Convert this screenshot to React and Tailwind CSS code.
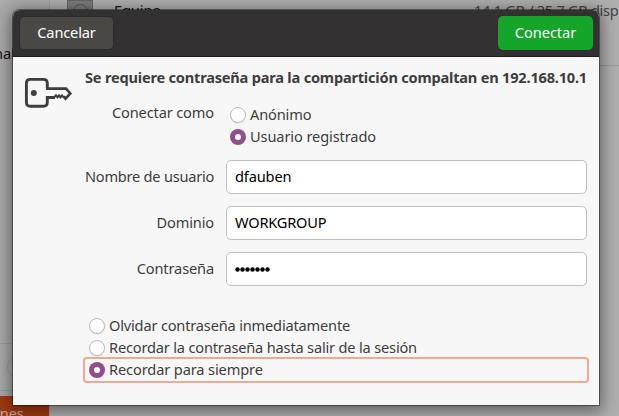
import React from 'react';

function Radio({ checked }) {
  return checked ? (
    <span className="flex size-4 shrink-0 items-center justify-center rounded-full bg-[#924d8b]">
      <span className="size-[6px] rounded-full bg-white" />
    </span>
  ) : (
    <span className="size-4 shrink-0 rounded-full border border-[#b9b9b9] bg-white shadow-[0_1px_1px_rgba(0,0,0,0.06)]" />
  );
}

function Option({ checked, className = '', children }) {
  return (
    <label className={`flex h-[22px] items-center gap-[4px] ${className}`}>
      <Radio checked={checked} />
      <span className="pb-[2px]">{children}</span>
    </label>
  );
}

function Field({ label, labelClass, children }) {
  return (
    <div className="flex h-[34px] items-center gap-3">
      <span className={`w-[129px] pb-[2px] text-right whitespace-nowrap ${labelClass}`}>{label}</span>
      <div className="flex h-full flex-1 items-center rounded-[5px] border border-[#bfbfbf] bg-white pl-[8px] text-black">
        {children}
      </div>
    </div>
  );
}

function KeyIcon() {
  return (
    <svg width="50" height="32" viewBox="0 0 50 32" fill="none" stroke="#3d3d3d">
      <path
        d="M23.3 11V6.3Q23.3 2.4 19.3 2.4H6.3Q2.4 2.4 2.4 6.3V25.2Q2.4 29.2 6.3 29.2H19.3Q23.3 29.2 23.3 25.2V20.5H31"
        strokeWidth="2.9"
      />
      <path d="M22 11.6H42L46.3 16.4L41.5 21.6L39.8 19.2" strokeWidth="2.6" />
      <path d="M30 20.5L32 18.3L33.5 20.3L35 18.3L36.5 20.3L38 18.3L40 20.8" strokeWidth="2" />
      <circle cx="9.8" cy="16" r="3" fill="#3d3d3d" stroke="none" />
    </svg>
  );
}

function Backdrop() {
  return (
    <div className="flex h-full text-[14.6px] leading-5">
      <aside className="flex w-[50px] shrink-0 flex-col border-r border-[#9d9d9d] bg-[#ababab]">
        <div className="h-[343px] pt-[43px]">
          <span className="-ml-[6px] block text-[#111]">nal</span>
        </div>
        <div className="h-[48px] border-y border-[#9b9b9b] pt-[11px] pl-[7px]">
          <div className="size-6 rounded-full border border-[#989898]" />
        </div>
        <div className="h-[5px]" />
        <div className="flex-1 bg-[#a23a14] pt-[7px] text-[#c4b0a6]">
          <span className="-ml-[9px] block h-[13px] tracking-[-0.1px]">ones</span>
        </div>
      </aside>
      <main className="flex-1 bg-[#afafaf]">
        <div className="flex h-[66px] border-b border-[#999] pl-[17px]">
          <div className="flex h-7 w-[26px] justify-center border border-[#666] bg-[#7b7b7b] pt-[3px]">
            <div className="h-4 w-[15px] rounded-full border border-[#555]" />
          </div>
          <span className="ml-[21px] tracking-[-0.12px] text-[#111]">Equipo</span>
          <span className="ml-auto w-[145px] whitespace-nowrap text-[#454545] tracking-[-0.31px]">
            14,1 GB / 25,7 GB disp
          </span>
        </div>
      </main>
    </div>
  );
}

function Dialog() {
  return (
    <section className="absolute top-[10px] left-[13px] flex h-[395px] w-[586px] flex-col rounded-t-[7px] bg-[#f7f7f7] text-[14.6px] leading-5 text-[#3d3d3d] shadow-[0_0_0_1px_rgba(0,0,0,0.4),0_3px_16px_3px_rgba(0,0,0,0.45)]">
      <header className="flex h-[47px] shrink-0 items-center justify-between rounded-t-[7px] border-b border-[#1e1c1c] bg-[#323030] px-[7px] text-white">
        <button className="h-8 w-[93px] rounded-[4px] bg-[#4a4844] pb-[2px] tracking-[-0.15px] shadow-[0_0_0_1px_rgba(0,0,0,0.12)]">
          Cancelar
        </button>
        <button className="mr-[-1px] h-[34px] w-[95px] rounded-[5px] bg-[#14a52a] pb-[2px] tracking-[-0.05px]">
          Conectar
        </button>
      </header>
      <div className="flex pl-[11px]">
        <div className="w-[61px] shrink-0 pt-[20px]">
          <KeyIcon />
        </div>
        <div className="w-[502px] pt-[10px]">
          <h1 className="font-bold whitespace-nowrap tracking-[-0.21px]">
            Se requiere contraseña para la compartición compaltan en 192.168.10.1
          </h1>
          <div className="mt-[17px] flex gap-4">
            <span className="-mt-[2px] w-[129px] text-right whitespace-nowrap tracking-[-0.14px]">Conectar como</span>
            <div>
              <Option className="tracking-[-0.16px]">Anónimo</Option>
              <Option checked className="tracking-[-0.11px]">Usuario registrado</Option>
            </div>
          </div>
          <div className="mt-[12px] flex flex-col gap-3">
            <Field label="Nombre de usuario" labelClass="tracking-[-0.24px]">
              <span className="pb-[2px] tracking-[-0.16px]">dfauben</span>
            </Field>
            <Field label="Dominio" labelClass="tracking-[-0.14px]">
              <span className="pb-[2px] tracking-[-0.22px]">WORKGROUP</span>
            </Field>
            <Field label="Contraseña" labelClass="tracking-[-0.14px]">
              <span className="flex">
                {Array.from({ length: 7 }, (_, i) => (
                  <i key={i} className="size-[5px] scale-90 rounded-full bg-black" />
                ))}
              </span>
            </Field>
          </div>
          <div className="mt-[29px] -ml-[2px] w-[506px] pl-[6px]">
            <Option className="tracking-[-0.18px]">Olvidar contraseña inmediatamente</Option>
            <Option className="tracking-[-0.18px]">Recordar la contraseña hasta salir de la sesión</Option>
          </div>
          <div className="-mt-[2px] -ml-[2px] flex h-[26px] w-[506px] items-center rounded-[4px] border-2 border-[#f2a98f] pl-[4px]">
            <Option checked className="tracking-[-0.12px]">Recordar para siempre</Option>
          </div>
        </div>
      </div>
    </section>
  );
}

export default function App() {
  return (
    <div className="relative h-[416px] w-[619px] overflow-hidden font-['Noto_Sans',sans-serif]">
      <Backdrop />
      <Dialog />
    </div>
  );
}
